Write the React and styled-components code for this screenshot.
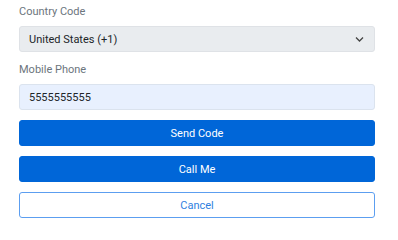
import React, { useState } from "react";
import styled, { createGlobalStyle } from "styled-components";

const GlobalStyle = createGlobalStyle`
  body {
    margin: 0;
    background: #ffffff;
    font-family: Roboto, "Liberation Sans", sans-serif;
  }
`;

const Form = styled.form`
  width: 356px;
  padding: 3px 19px 0;
  display: flex;
  flex-direction: column;
`;

const Field = styled.div`
  display: flex;
  flex-direction: column;
  margin-bottom: 9px;
`;

const Label = styled.label`
  font-size: 11px;
  line-height: 18px;
  color: #6c757d;
  margin-bottom: 5px;
`;

const SelectWrap = styled.div`
  position: relative;
  height: 26px;
`;

const Select = styled.select`
  appearance: none;
  width: 100%;
  height: 26px;
  box-sizing: border-box;
  padding: 0 9px;
  font-family: Roboto, "Liberation Sans", sans-serif;
  font-size: 11px;
  color: #212529;
  background: #e9ecef;
  border: 1px solid #dfe2e6;
  border-radius: 3px;
  outline: none;
`;

const Chevron = styled.svg`
  position: absolute;
  right: 11px;
  top: 9px;
  pointer-events: none;
`;

const Input = styled.input`
  width: 100%;
  height: 26px;
  box-sizing: border-box;
  padding: 0 9px;
  font-family: Roboto, "Liberation Sans", sans-serif;
  font-size: 11px;
  color: #212529;
  background: #e8f0fe;
  border: 1px solid #dbe3ee;
  border-radius: 3px;
  outline: none;
`;

const Actions = styled.div`
  display: flex;
  flex-direction: column;
  gap: 10px;
  margin-top: 1px;
`;

const Button = styled.button`
  height: 26px;
  width: 100%;
  box-sizing: border-box;
  font-family: Roboto, "Liberation Sans", sans-serif;
  font-size: 11px;
  border-radius: 3px;
  cursor: pointer;
  background: ${({ $outline }) => ($outline ? "#ffffff" : "#0066d8")};
  color: ${({ $outline }) => ($outline ? "#2f7fe0" : "#ffffff")};
  border: 1px solid ${({ $outline }) => ($outline ? "#5c9ef0" : "#0066d8")};
`;

export default function App() {
  const [phone, setPhone] = useState("5555555555");
  return (
    <>
      <GlobalStyle />
      <Form onSubmit={(e) => e.preventDefault()}>
        <Field>
          <Label>Country Code</Label>
          <SelectWrap>
            <Select defaultValue="us">
              <option value="us">United States (+1)</option>
            </Select>
            <Chevron width="9" height="8" viewBox="0 0 9 8">
              <path d="M1 2.5 L4.5 6 L8 2.5" fill="none" stroke="#444" strokeWidth="1.3" />
            </Chevron>
          </SelectWrap>
        </Field>
        <Field>
          <Label>Mobile Phone</Label>
          <Input value={phone} onChange={(e) => setPhone(e.target.value)} />
        </Field>
        <Actions>
          <Button type="button">Send Code</Button>
          <Button type="button">Call Me</Button>
          <Button type="button" $outline>
            Cancel
          </Button>
        </Actions>
      </Form>
    </>
  );
}
